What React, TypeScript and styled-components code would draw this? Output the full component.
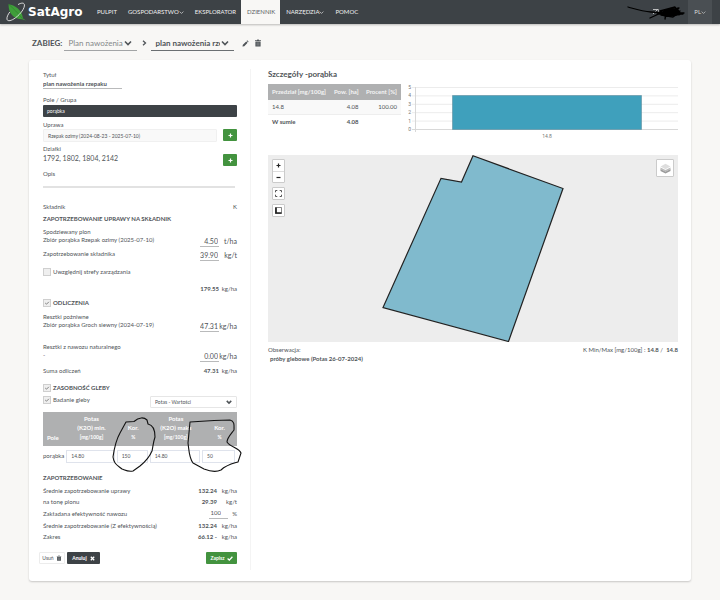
import React from "react";
import styled, { createGlobalStyle, css } from "styled-components";

const ink = "#4f5458";
const dark = "#3d4246";
const green = "#43933f";

const GlobalStyle = createGlobalStyle`
  *, *::before, *::after { box-sizing: border-box; }
  body {
    margin: 0;
    background: #f8f7f5;
    color: ${ink};
    font: 400 6px/8px Lato, sans-serif;
  }
  input, select, button, textarea { font: inherit; color: inherit; margin: 0; }
  svg { flex-shrink: 0; }
`;

/* ---------- top bar ---------- */

const TopBar = styled.header`
  display: flex;
  align-items: stretch;
  height: 24px;
  background: ${dark};
  color: #f1f1f1;
  padding: 0 8px 0 6px;
  box-shadow: 0 1px 2px rgba(0, 0, 0, 0.25);
`;

const Brand = styled.a`
  display: flex;
  align-items: center;
  gap: 2px;
  width: 85px;
  color: #fff;
  text-decoration: none;
  font: 700 12px/24px "DejaVu Sans", sans-serif;
`;

const Nav = styled.nav`
  display: flex;
  flex: 1;
`;

const NavLink = styled.a<{ $active?: boolean }>`
  display: flex;
  align-items: center;
  padding: 0 5px 0 6px;
  color: inherit;
  text-decoration: none;
  ${(p) => p.$active && css`
    background: #f8f7f5;
    color: #5c6165;
  `}
`;

const Account = styled.div`
  display: flex;
  align-items: center;
  margin-right: 3px;
`;

const LanguageButton = styled.button`
  display: flex;
  align-items: center;
  border: 0;
  padding: 0 6px;
  background: #4a4f53;
  color: #d8d8d8;
`;

/* ---------- breadcrumb ---------- */

const Crumbs = styled.div`
  display: flex;
  align-items: center;
  height: 36px;
  padding: 2px 32px 0;
  font-size: 8px;
  line-height: 16px;
`;

const CrumbLabel = styled.span`
  font-weight: 700;
  margin-right: 2px;
`;

const SelectWrap = styled.span<{ $width: number }>`
  position: relative;
  display: flex;
  align-items: center;
  width: ${(p) => p.$width}px;
  svg {
    position: absolute;
    right: 5px;
    pointer-events: none;
  }
`;

const CrumbSelect = styled.select<{ $strong?: boolean }>`
  appearance: none;
  width: 100%;
  height: 16px;
  padding: 0 14px 0 4px;
  border: 0;
  border-bottom: 1px solid ${(p) => (p.$strong ? "#6b6f72" : "#a2a4a5")};
  border-radius: 0;
  background: transparent;
  color: ${(p) => (p.$strong ? ink : "#85888a")};
  font-weight: ${(p) => (p.$strong ? 700 : 400)};
`;

const CrumbArrow = styled.span`
  display: flex;
  width: 14px;
  justify-content: center;
`;

const IconButton = styled.button`
  display: flex;
  border: 0;
  padding: 0;
  margin-left: 5px;
  background: none;
  &:first-of-type { margin-left: 8px; }
`;

/* ---------- card ---------- */

const Card = styled.main`
  display: grid;
  grid-template-columns: minmax(0, 222fr) minmax(0, 440fr);
  margin: 0 29px 19px;
  padding: 9px 0 11px;
  background: #fff;
  border-radius: 3px;
  box-shadow: 0 1px 2px rgba(0, 0, 0, 0.2);
`;

const FormColumn = styled.form`
  display: flex;
  flex-direction: column;
  padding: 2px 13px 6px 14px;
  border-right: 1px solid #f4f4f4;
`;

const DetailColumn = styled.section`
  padding: 0 13px 0 17px;
`;

const Line = styled.div<{ $top?: number }>`
  display: flex;
  justify-content: space-between;
  align-items: flex-start;
  white-space: nowrap;
  margin-top: ${(p) => p.$top ?? 0}px;
`;

const FieldLabel = styled.label<{ $top?: number }>`
  display: block;
  white-space: nowrap;
  margin-top: ${(p) => p.$top ?? 0}px;
`;

const Heading = styled.h2<{ $top?: number }>`
  margin: ${(p) => p.$top ?? 0}px 0 0;
  font-size: 6px;
  line-height: 8px;
  font-weight: 700;
`;

const TitleInput = styled.input`
  width: 79px;
  height: 10px;
  padding: 0;
  border: 0;
  border-bottom: 1px solid #b9babb;
  background: none;
  font-weight: 700;
`;

const FieldBar = styled.div`
  height: 12px;
  margin-top: 1px;
  padding: 0 4px;
  border-radius: 1px;
  background: ${dark};
  color: #fff;
  font-size: 5px;
  line-height: 12px;
`;

const CropInput = styled.input`
  flex: 1;
  min-width: 0;
  height: 13px;
  margin-right: 6px;
  padding: 0 4px;
  border: 1px solid #f0f0f0;
  border-radius: 1px;
  background: #f9f9f9;
  font-size: 5px;
`;

const AddButton = styled.button`
  display: flex;
  align-items: center;
  justify-content: center;
  width: 14px;
  height: 12px;
  padding: 0;
  border: 0;
  border-radius: 1px;
  background: ${green};
`;

const Plots = styled.span`
  font-size: 7px;
`;

const Notes = styled.textarea`
  display: block;
  width: calc(100% - 2px);
  height: 10px;
  padding: 0;
  border: 0;
  border-bottom: 2px solid #e2e2e2;
  background: none;
  resize: none;
`;

const Amount = styled.span<{ $big?: boolean }>`
  display: flex;
  align-items: flex-start;
  font-size: ${(p) => (p.$big ? 7 : 6)}px;
  line-height: ${(p) => (p.$big ? 10 : 8)}px;
`;

const AmountInput = styled.input`
  width: 19px;
  height: 11px;
  padding: 0 1px 1px 0;
  border: 0;
  border-bottom: 1px solid #b9babb;
  border-radius: 0;
  background: none;
  text-align: right;
`;

const Unit = styled.span<{ $wide?: boolean }>`
  width: ${(p) => (p.$wide ? 20 : 18)}px;
  text-align: right;
`;

const Check = styled.label<{ $strong?: boolean }>`
  display: flex;
  align-items: center;
  gap: 2px;
  font-weight: ${(p) => (p.$strong ? 700 : 400)};
`;

const Tick = styled.input`
  appearance: none;
  width: 8px;
  height: 8px;
  border: 1px solid #cfcfcf;
  background: #efefef;
  &:checked {
    background: #efefef url("data:image/svg+xml,%3Csvg xmlns='http://www.w3.org/2000/svg' viewBox='0 0 6 6'%3E%3Cpath d='M1.2 3 2.5 4.2 4.9 1.8' fill='none' stroke='%23666' stroke-width='.8'/%3E%3C/svg%3E") center / 6px 6px no-repeat;
  }
`;

const ValueSelect = styled.select`
  appearance: none;
  width: 100%;
  height: 12px;
  padding: 0 14px 0 4px;
  border: 1px solid #e6e6e6;
  border-radius: 1px;
  background: #fff;
  font-size: 5px;
`;

const SoilWrap = styled.div`
  position: relative;
  margin-top: 4px;
`;

const SoilTable = styled.table`
  width: 100%;
  table-layout: fixed;
  border-collapse: collapse;
  th {
    height: 34px;
    padding: 0 0 4px;
    background: #afb0b1;
    color: #fff;
    font-weight: 700;
    line-height: 9px;
    vertical-align: bottom;
  }
  th:first-child { text-align: left; padding-left: 4px; }
  small { font-size: 5px; }
  td {
    height: 20px;
    padding: 0 2px 0 0;
    white-space: nowrap;
  }
`;

const SoilInput = styled.input`
  display: block;
  width: 100%;
  height: 13px;
  padding: 0 4px;
  border: 1px solid #dfe3ec;
  font-size: 5px;
`;

const PenMarks = styled.svg`
  position: absolute;
  top: 0;
  left: 66px;
  overflow: visible;
  pointer-events: none;
`;

const SummaryList = styled.div`
  margin-top: 3px;
`;

const SummaryRow = styled.div<{ $tall?: boolean }>`
  display: flex;
  justify-content: space-between;
  align-items: center;
  height: ${(p) => (p.$tall ? 13 : 11)}px;
  white-space: nowrap;
  ${Amount} { align-items: center; }
  ${AmountInput} { padding-right: 7px; }
`;

const Percent = styled.span`
  width: 9px;
  text-align: right;
`;

const Actions = styled.div`
  display: flex;
  gap: 2px;
  margin: 10px 0 0 -4px;
`;

const ActionButton = styled.button<{ $tone: "plain" | "dark" | "green" }>`
  display: flex;
  align-items: center;
  justify-content: center;
  gap: 2px;
  height: 12px;
  padding: 0 3px;
  border: 1px solid transparent;
  border-radius: 1px;
  font-size: 5px;
  font-weight: 700;
  color: #fff;
  ${(p) => p.$tone === "plain" && css`
    width: 26px;
    background: #fff;
    border-color: #ececec;
    color: ${ink};
    font-weight: 400;
  `}
  ${(p) => p.$tone === "dark" && css`
    width: 33px;
    gap: 3px;
    background: ${dark};
  `}
  ${(p) => p.$tone === "green" && css`
    width: 31px;
    margin-left: auto;
    background: ${green};
  `}
`;

/* ---------- details ---------- */

const DetailTitle = styled.h1`
  margin: 0;
  font-size: 8px;
  line-height: 10px;
  font-weight: 700;
`;

const StatsRow = styled.div`
  display: grid;
  grid-template-columns: minmax(0, 133fr) minmax(0, 270fr);
  gap: 7px;
  margin-top: 5px;
`;

const StatsTable = styled.table`
  width: 100%;
  border-collapse: collapse;
  white-space: nowrap;
  align-self: start;
  th, td { padding: 0 4px 0 3px; text-align: right; }
  th:first-child, td:first-child { padding-left: 4px; text-align: left; }
  th { height: 16px; background: #afb0b1; color: #f4f4f4; font-weight: 700; }
  tbody td { height: 14px; background: #f9f9f9; border-bottom: 1px solid #eee; }
  tfoot td { height: 16px; font-weight: 700; }
`;

const Chart = styled.svg`
  display: block;
  width: 100%;
  text {
    font: 400 5px Roboto, sans-serif;
    fill: #777;
  }
`;

const MapView = styled.div`
  position: relative;
  margin-top: 13px;
  background: #ededed;
`;

const FieldShape = styled.svg`
  display: block;
  width: 100%;
`;

const MapTools = styled.div`
  position: absolute;
  top: 4px;
  left: 4px;
  display: flex;
  flex-direction: column;
  gap: 4px;
`;

const ToolGroup = styled.div`
  border: 1px solid #cbcbcb;
  border-radius: 1px;
  background: #fff;
`;

const ToolButton = styled.button<{ $divided?: boolean }>`
  display: flex;
  align-items: center;
  justify-content: center;
  width: 11px;
  height: 11px;
  padding: 0;
  border: 0;
  background: none;
  ${(p) => p.$divided && css`border-top: 1px solid #ddd;`}
`;

const LayersButton = styled.button`
  position: absolute;
  top: 4px;
  right: 4px;
  display: flex;
  align-items: center;
  justify-content: center;
  width: 18px;
  height: 18px;
  padding: 0;
  border: 1px solid #cbcbcb;
  border-radius: 1px;
  background: #fff;
`;

const MapNotes = styled.div`
  display: flex;
  justify-content: space-between;
  margin-top: 4px;
`;

const Observation = styled.p`
  margin: 0;
  strong { display: block; padding: 1px 0 0 2px; }
`;

const MinMax = styled.p`
  margin: 0;
`;

/* ---------- icons ---------- */

const Chevron = ({ size = 5, weight = 1 }: { size?: number; weight?: number }) => (
  <svg width={size} height={size} viewBox="0 0 8 8" aria-hidden="true">
    <path d="M1 2.500 4 5.500 7 2.500" fill="none" stroke="currentColor" strokeWidth={weight} />
  </svg>
);

const LogoMark = () => (
  <svg width="20" height="20" viewBox="0 0 20 20" aria-hidden="true">
    <path d="M2.500 2.200C8.500 2.800 16 7.500 17 16.400L20 18.600 16 17.200C8 17 2.500 12 2.500 2.200Z" fill="#3f9e3a" />
    <path d="M2.500 2.200C7 6 12 11 16.500 16.800" fill="none" stroke="#2d7c2b" strokeWidth=".6" />
    <path d="M12 2.600C15 .8 18 .5 18.400 2.600 19 6 14.600 12 9.500 15.800 5.500 18.800 1.700 19.700 1 17.400.5 15.400 2 12.400 3.800 10" fill="none" stroke="#e9e9e9" strokeWidth=".9" />
  </svg>
);

const Scribble = () => (
  <svg width="58" height="16" viewBox="0 0 58 16" aria-hidden="true">
    <path d="M26 5.500h4M26 10l5-5 1 5" stroke="#ddd" strokeWidth=".8" fill="none" />
    <path d="M1 3C8 5 15 7.500 24 8L40 9M23 14C28 12 34 8 42 6L52 4 44 12 36 9 50 5 54 10 40 12 33 7 48 3 52 11 41 5 38 13 53 7 46 13 34 11 44 4 56 10 32 10M39 10l-1 5M30 9h27" fill="none" stroke="#000" strokeWidth="1.300" strokeLinejoin="round" strokeLinecap="round" />
    <ellipse cx="45" cy="8.500" rx="8" ry="4" fill="#000" />
  </svg>
);

const Trash = ({ size }: { size: number }) => (
  <svg width={size} height={size} viewBox="0 0 8 8" aria-hidden="true">
    <path d="M1 1.300h2L3.300.5h1.400l.3.8h2v.8H1zM1.400 2.500h5.200V7.500H1.400z" fill="currentColor" />
    <path d="M3 3.300v3.400M4 3.300v3.400M5 3.300v3.400" stroke="#fff" strokeOpacity=".5" strokeWidth=".4" />
  </svg>
);

const Pencil = () => (
  <svg width="7" height="7" viewBox="0 0 8 8" aria-hidden="true">
    <path d="M.5 7.500 1 5.400 4.800 1.600 6.400 3.200 2.600 7zM5.300 1.100 6 .4 7.600 2 6.900 2.700z" fill="currentColor" />
  </svg>
);

const Plus = ({ color = "#fff" }: { color?: string }) => (
  <svg width="5" height="5" viewBox="0 0 5 5" aria-hidden="true">
    <path d="M2.500.5v4M.5 2.500h4" stroke={color} strokeWidth="1.200" />
  </svg>
);

const Minus = () => (
  <svg width="5" height="5" viewBox="0 0 5 5" aria-hidden="true">
    <path d="M.5 2.500h4" stroke="#222" strokeWidth="1.200" />
  </svg>
);

const Expand = () => (
  <svg width="7" height="7" viewBox="0 0 7 7" aria-hidden="true">
    <path d="M.5 2.300V.5h1.800M4.700.5h1.800v1.800M6.500 4.700v1.800H4.700M2.300 6.500H.5V4.700" fill="none" stroke="#444" strokeWidth=".9" />
  </svg>
);

const Ruler = () => (
  <svg width="7" height="7" viewBox="0 0 7 7" aria-hidden="true">
    <path d="M.5.5h6v6h-6z" fill="none" stroke="#555" strokeWidth=".7" />
    <path d="M1 .5v5.500h5.500" fill="none" stroke="#222" strokeWidth="1.700" />
  </svg>
);

const Layers = () => (
  <svg width="11" height="11" viewBox="0 0 11 11" aria-hidden="true">
    <path d="M.5 6 5.500 8.500 10.500 6v2L5.500 10.600.5 8z" fill="#9b9b9b" />
    <path d="M.5 4.500 5.500 7 10.500 4.500v1.800L5.500 8.800.5 6.300z" fill="#bcbcbc" />
    <path d="M5.500.8 10.500 3.500 5.500 6.200.5 3.500z" fill="#dedede" />
  </svg>
);

const Cross = () => (
  <svg width="5" height="5" viewBox="0 0 5 5" aria-hidden="true">
    <path d="M.8.8 4.200 4.200M4.200.8.8 4.200" stroke="#fff" strokeWidth="1.300" />
  </svg>
);

const CheckMark = () => (
  <svg width="6" height="5" viewBox="0 0 6 5" aria-hidden="true">
    <path d="M.6 2.500 2.300 4.100 5.400.8" fill="none" stroke="#fff" strokeWidth="1.300" />
  </svg>
);

/* ---------- data ---------- */

const navItems = [
  { label: "PULPIT" },
  { label: "GOSPODARSTWO", menu: true },
  { label: "EKSPLORATOR" },
  { label: "DZIENNIK", active: true },
  { label: "NARZĘDZIA", menu: true },
  { label: "POMOC" },
];

const gridLines = [5, 4, 3, 2, 1, 0];

interface EntryProps { id: string; label: string; value: string; unit: string; top?: number }

const Entry = ({ id, label, value, unit, top }: EntryProps) => (
  <Line $top={top}>
    <label htmlFor={id}>{label}</label>
    <Amount $big>
      <AmountInput id={id} defaultValue={value} />
      <Unit>{unit}</Unit>
    </Amount>
  </Line>
);

const Summary = ({ label, value, unit }: { label: string; value: string; unit: string }) => (
  <SummaryRow>
    <span>{label}</span>
    <Amount><strong>{value}</strong><Unit $wide>{unit}</Unit></Amount>
  </SummaryRow>
);

export default function App() {
  return (
    <>
      <GlobalStyle />
      <TopBar>
        <Brand href="#"><LogoMark />SatAgro</Brand>
        <Nav>
          {navItems.map((n) => (
            <NavLink key={n.label} href="#" $active={n.active}>
              {n.label}{n.menu && <Chevron />}
            </NavLink>
          ))}
        </Nav>
        <Account><Scribble /></Account>
        <LanguageButton type="button">PL<Chevron /></LanguageButton>
      </TopBar>

      <Crumbs>
        <CrumbLabel>ZABIEG:</CrumbLabel>
        <SelectWrap $width={73}>
          <CrumbSelect aria-label="Rodzaj zabiegu"><option>Plan nawożenia</option></CrumbSelect>
          <Chevron size={8} weight={1.6} />
        </SelectWrap>
        <CrumbArrow>
          <svg width="5" height="6" viewBox="0 0 5 6" aria-hidden="true">
            <path d="M1 .8 3.500 3 1 5.200" fill="none" stroke="currentColor" strokeWidth="1.300" />
          </svg>
        </CrumbArrow>
        <SelectWrap $width={83}>
          <CrumbSelect $strong aria-label="Zabieg"><option>plan nawożenia rzepaku</option></CrumbSelect>
          <Chevron size={8} weight={1.6} />
        </SelectWrap>
        <IconButton type="button" aria-label="Edytuj"><Pencil /></IconButton>
        <IconButton type="button" aria-label="Usuń zabieg"><Trash size={8} /></IconButton>
      </Crumbs>

      <Card>
        <FormColumn onSubmit={(e) => e.preventDefault()}>
          <FieldLabel htmlFor="title">Tytuł</FieldLabel>
          <TitleInput id="title" defaultValue="plan nawożenia rzepaku" />
          <Line $top={7}>Pole / Grupa</Line>
          <FieldBar>porąbka</FieldBar>
          <FieldLabel $top={4} htmlFor="crop">Uprawa</FieldLabel>
          <Line>
            <CropInput id="crop" readOnly value="Rzepak ozimy (2024-08-23 - 2025-07-10)" />
            <AddButton type="button" aria-label="Dodaj uprawę"><Plus /></AddButton>
          </Line>
          <Line $top={3}>Działki</Line>
          <Line $top={1}>
            <Plots>1792, 1802, 1804, 2142</Plots>
            <AddButton type="button" aria-label="Dodaj działkę"><Plus /></AddButton>
          </Line>
          <FieldLabel $top={4} htmlFor="notes">Opis</FieldLabel>
          <Notes id="notes" />

          <Line $top={15}><span>Składnik</span><span>K</span></Line>
          <Heading $top={4}>ZAPOTRZEBOWANIE UPRAWY NA SKŁADNIK</Heading>
          <Line $top={5}>Spodziewany plon</Line>
          <Entry id="yield" label="Zbiór porąbka Rzepak ozimy (2025-07-10)" value="4.50" unit="t/ha" />
          <Entry id="need" label="Zapotrzebowanie składnika" value="39.90" unit="kg/t" top={3} />
          <Line $top={7}>
            <Check><Tick type="checkbox" />Uwzględnij strefy zarządzania</Check>
          </Line>
          <Line $top={9}><span /><Amount><strong>179.55</strong><Unit>kg/ha</Unit></Amount></Line>
          <Line $top={6}>
            <Check $strong><Tick type="checkbox" defaultChecked />ODLICZENIA</Check>
          </Line>
          <Line $top={6}>Resztki pożniwne</Line>
          <Entry id="residue" label="Zbiór porąbka Groch siewny (2024-07-19)" value="47.31" unit="kg/ha" />
          <Line $top={11}>Resztki z nawozu naturalnego</Line>
          <Entry id="manure" label="-" value="0.00" unit="kg/ha" />
          <Line $top={5}><span>Suma odliczeń</span><Amount><strong>47.31</strong><Unit>kg/ha</Unit></Amount></Line>
          <Line $top={9}>
            <Check $strong><Tick type="checkbox" defaultChecked />ZASOBNOŚĆ GLEBY</Check>
          </Line>
          <Line $top={4}>
            <Check><Tick type="checkbox" defaultChecked />Badanie gleby</Check>
            <SelectWrap $width={87}>
              <ValueSelect aria-label="Badanie"><option>Potas - Wartości</option></ValueSelect>
              <Chevron size={6} weight={2} />
            </SelectWrap>
          </Line>

          <SoilWrap>
            <SoilTable>
              <colgroup>
                <col style={{ width: "12%" }} />
                <col style={{ width: "26%" }} />
                <col style={{ width: "17%" }} />
                <col style={{ width: "27%" }} />
                <col style={{ width: "18%" }} />
              </colgroup>
              <thead>
                <tr>
                  <th>Pole</th>
                  <th>Potas<br />(K2O) min.<br /><small>[mg/100g]</small></th>
                  <th>Kor.<br /><small>%</small></th>
                  <th>Potas<br />(K2O) maks<br /><small>[mg/100g]</small></th>
                  <th>Kor.<br /><small>%</small></th>
                </tr>
              </thead>
              <tbody>
                <tr>
                  <td>porąbka</td>
                  <td><SoilInput aria-label="Potas min." defaultValue="14.80" /></td>
                  <td><SoilInput aria-label="Korekta min. %" defaultValue="150" /></td>
                  <td><SoilInput aria-label="Potas maks." defaultValue="14.80" /></td>
                  <td><SoilInput aria-label="Korekta maks. %" defaultValue="50" /></td>
                </tr>
              </tbody>
            </SoilTable>
            <PenMarks width="134" height="62" viewBox="0 0 134 62" aria-hidden="true">
              <path d="M17 10 25 9.500C30 5 35 5 38 8L39 12C44 13 46 19 46 25 44 31 44 35 43 39 40 46 36 50 31 54L24 59C19 60 16 58 13 57 8 53 5 52 4 45 5 38 7 28 11 21ZM81 10 105 8.500 121 8C126 9 125 14 125 18 122 22 118 26 118 30 121 35 130 36 132 41L129 50C122 52 117 53 112 58 106 61 100 59 95 57L84 51C80 46 80 38 79 31Z" fill="none" stroke="#111" strokeWidth="1.100" strokeLinejoin="round" />
            </PenMarks>
          </SoilWrap>

          <Heading $top={8}>ZAPOTRZEBOWANIE</Heading>
          <SummaryList>
            <Summary label="Średnie zapotrzebowanie uprawy" value="132.24" unit="kg/ha" />
            <Summary label="na tonę plonu" value="29.39" unit="kg/t" />
            <SummaryRow $tall>
              <label htmlFor="efficiency">Zakładana efektywność nawozu</label>
              <Amount>
                <AmountInput id="efficiency" defaultValue="100" />
                <Percent>%</Percent>
              </Amount>
            </SummaryRow>
            <Summary label="Średnie zapotrzebowanie (Z efektywnością)" value="132.24" unit="kg/ha" />
            <Summary label="Zakres" value="66.12 -" unit="kg/ha" />
          </SummaryList>

          <Actions>
            <ActionButton type="button" $tone="plain">Usuń<Trash size={6} /></ActionButton>
            <ActionButton type="button" $tone="dark">Anuluj<Cross /></ActionButton>
            <ActionButton type="submit" $tone="green">Zapisz<CheckMark /></ActionButton>
          </Actions>
        </FormColumn>

        <DetailColumn>
          <DetailTitle>Szczegóły -porąbka</DetailTitle>
          <StatsRow>
            <StatsTable>
              <thead>
                <tr><th>Przedział [mg/100g]</th><th>Pow. [ha]</th><th>Procent [%]</th></tr>
              </thead>
              <tbody>
                <tr><td>14.8</td><td>4.08</td><td>100.00</td></tr>
              </tbody>
              <tfoot>
                <tr><td>W sumie</td><td>4.08</td><td /></tr>
              </tfoot>
            </StatsTable>
            <Chart viewBox="0 0 270 58" role="img" aria-label="Powierzchnia według przedziału">
              {gridLines.map((v) => (
                <g key={v}>
                  <path d={`M4 ${45.5 - v * 8.4}H270`} stroke={v === 0 ? "#d8d8d8" : "#ececec"} />
                  <text x="3" y={47 - v * 8.4} textAnchor="end">{v}</text>
                </g>
              ))}
              <path d="M7.500 3v45" stroke="#d8d8d8" />
              <path d="M44.500 11.500h189v34h-189z" fill="#3fa0bc" stroke="#5f8fa0" strokeWidth=".6" />
              <text x="139" y="54" textAnchor="middle">14.8</text>
            </Chart>
          </StatsRow>

          <MapView>
            <FieldShape viewBox="0 0 410 187" role="img" aria-label="Pole porąbka">
              <path d="M205 .8 295 33.500 240.500 186.500 115 152.500 173 23.300 193.500 27z" fill="#80bacd" stroke="#222" strokeWidth="1.200" />
            </FieldShape>
            <MapTools>
              <ToolGroup>
                <ToolButton type="button" aria-label="Przybliż"><Plus color="#222" /></ToolButton>
                <ToolButton type="button" $divided aria-label="Oddal"><Minus /></ToolButton>
              </ToolGroup>
              <ToolGroup><ToolButton type="button" aria-label="Pełny ekran"><Expand /></ToolButton></ToolGroup>
              <ToolGroup><ToolButton type="button" aria-label="Zmierz"><Ruler /></ToolButton></ToolGroup>
            </MapTools>
            <LayersButton type="button" aria-label="Warstwy"><Layers /></LayersButton>
          </MapView>

          <MapNotes>
            <Observation>Obserwacja:<strong>próby glebowe (Potas 26-07-2024)</strong></Observation>
            <MinMax>K Min/Max [mg/100g] : <strong>14.8</strong> / &nbsp;<strong>14.8</strong></MinMax>
          </MapNotes>
        </DetailColumn>
      </Card>
    </>
  );
}
